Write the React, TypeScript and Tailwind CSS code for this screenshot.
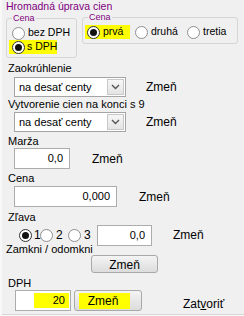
import React from "react";

const Radio = ({ checked = false }: { checked?: boolean }) => (
  <span
    className={`flex h-[13px] w-[13px] shrink-0 items-center justify-center rounded-full border bg-white ${
      checked ? "border-[#333333]" : "border-[#8f8f8f]"
    }`}
  >
    {checked && <span className="h-[7px] w-[7px] rounded-full bg-[#111111]" />}
  </span>
);

const Combo = () => (
  <div className="flex h-[20px] w-[112px] border border-[#a5a5a5] bg-white p-px">
    <span className="flex-1 pl-[3px] text-[11px] leading-[16px] whitespace-nowrap">na desať centy</span>
    <span className="flex w-[17px] items-center justify-center border border-[#c8c8c8] bg-linear-to-b from-[#f7f7f7] to-[#e4e4e4]">
      <svg width="9" height="6" viewBox="0 0 9 6">
        <path d="M1 1L4.5 4.5L8 1" fill="none" stroke="#555" strokeWidth="1.4" />
      </svg>
    </span>
  </div>
);

const Field = ({ className, children }: { className: string; children: React.ReactNode }) => (
  <div
    className={`flex h-[21px] items-center justify-end border border-[#acacac] bg-white pr-[6px] text-[11px] ${className}`}
  >
    {children}
  </div>
);

const Zmen = ({ className = "" }: { className?: string }) => (
  <span className={`text-[12px] ${className}`}>Zmeň</span>
);

export default function App() {
  return (
    <div className="flex h-[316px] w-[244px] flex-col overflow-hidden border-l-2 border-l-[#f8f8f8] bg-[#f0f0f0] font-['Liberation_Sans',Arial,sans-serif] text-black">
      <div className="flex flex-1 flex-col pl-[4px]">
        {/* title */}
        <div className="h-[12px] text-[10.5px] leading-[12px] text-[#800080]">Hromadná úprava cien</div>

        {/* price groups */}
        <div className="flex items-start whitespace-nowrap">
          <fieldset className="mt-px w-[71px] rounded-[3px] border border-[#d5d5d5] pt-[3px] pb-[3px]">
            <legend className="ml-[5px] px-px text-[9px] leading-[10px] text-[#800080]">Cena</legend>
            <div className="flex h-[14px] items-center gap-[3px] pl-[5px] text-[10.5px]">
              <Radio />
              bez DPH
            </div>
            <div className="ml-[2px] flex h-[14px] w-[48px] items-center gap-[2px] bg-[#ffff00] pl-[3px] text-[10.5px]">
              <Radio checked />s DPH
            </div>
          </fieldset>
          <fieldset className="ml-[5px] w-[156px] rounded-[3px] border border-[#d5d5d5] pt-[3px] pb-[4px]">
            <legend className="ml-[5px] px-px text-[9px] leading-[10px] text-[#800080]">Cena</legend>
            <div className="flex h-[14px] items-center text-[10.5px]">
              <div className="ml-[2px] flex h-[14px] w-[45px] items-center gap-[3px] bg-[#ffff00] pl-[2px]">
                <Radio checked />
                prvá
              </div>
              <div className="ml-[5px] flex w-[52px] items-center gap-[3px]">
                <Radio />
                druhá
              </div>
              <div className="flex items-center gap-[3px]">
                <Radio />
                tretia
              </div>
            </div>
          </fieldset>
        </div>

        <div className="mt-[4px] ml-[2px] text-[11px] leading-[12px]">Zaokrúhlenie</div>
        <div className="mt-[3px] ml-[8px] flex items-center">
          <Combo />
          <Zmen className="ml-[20px]" />
        </div>

        <div className="mt-px ml-[2px] text-[11px] leading-[12px]">Vytvorenie cien na konci s 9</div>
        <div className="mt-[2px] ml-[8px] flex items-center">
          <Combo />
          <Zmen className="ml-[20px]" />
        </div>

        <div className="mt-[3px] ml-[2px] text-[11px] leading-[12px]">Marža</div>
        <div className="mt-px ml-[8px] flex items-center">
          <Field className="w-[56px]">0,0</Field>
          <Zmen className="ml-[22px]" />
        </div>

        <div className="mt-[3px] ml-[2px] text-[11px] leading-[12px]">Cena</div>
        <div className="mt-[2px] ml-[8px] flex items-center">
          <Field className="w-[103px]">0,000</Field>
          <Zmen className="ml-[22px]" />
        </div>

        <div className="mt-[4px] ml-[2px] text-[11px] leading-[12px]">Zľava</div>
        <div className="mt-[2px] ml-[13px] flex h-[20px] items-center text-[12px]">
          <div className="flex w-[21px] items-center gap-[2px]">
            <Radio checked />1
          </div>
          <div className="flex w-[28px] items-center gap-[3px]">
            <Radio />2
          </div>
          <div className="flex w-[29px] items-center gap-[3px]">
            <Radio />3
          </div>
          <Field className="h-[20px] w-[55px]">0,0</Field>
          <Zmen className="ml-[21px]" />
        </div>

        <div className="-mt-px text-[11px] leading-[11px]">Zamkni / odomkni</div>
        <button className="ml-[85px] h-[18px] w-[67px] rounded-[3px] border border-[#a9a9a9] bg-linear-to-b from-[#f4f4f4] to-[#dcdcdc] text-[12px]">
          Zmeň
        </button>

        <div className="mt-[4px] ml-[2px] text-[11px] leading-[12px]">DPH</div>
        <div className="mt-px ml-[9px] flex h-[21px]">
          <div className="flex h-[21px] w-[56px] items-center justify-end border border-[#acacac] bg-white py-[2px] pr-px text-[11px]">
            <span className="flex h-full w-[35px] items-center justify-end bg-[#ffff00] pr-[4px]">20</span>
          </div>
          <button className="ml-[3px] flex h-[21px] w-[68px] items-center rounded-[3px] border border-[#a9a9a9] bg-linear-to-b from-[#f4f4f4] to-[#dcdcdc] text-[12px]">
            <span className="ml-[4px] flex h-[16px] w-[51px] items-center justify-center bg-[#ffff00] pr-[3px]">Zmeň</span>
          </button>
          <span className="ml-[41px] self-end text-[12px] leading-[14px]">
            Zat<span className="underline">v</span>oriť
          </span>
        </div>
      </div>
      <div className="h-[2px] border-t border-[#d6d6d6] bg-[#fafafa]" />
    </div>
  );
}
